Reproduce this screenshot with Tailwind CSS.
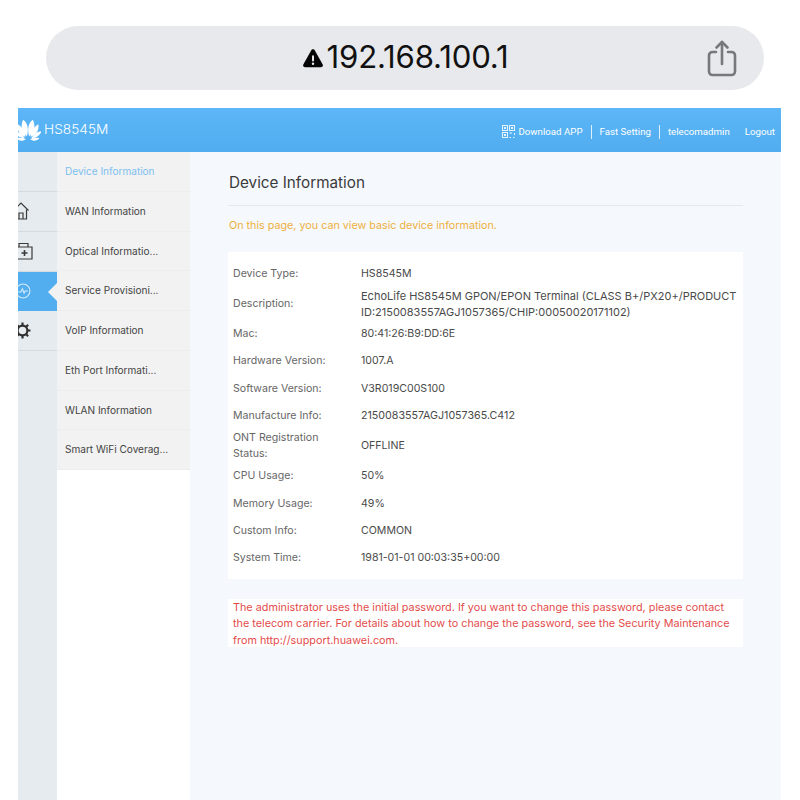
<!DOCTYPE html>
<html lang="en">
<head>
  <meta charset="UTF-8">
  <title>HS8545M - Device Information</title>
  <script src="https://cdn.jsdelivr.net/npm/@tailwindcss/browser@4"></script>
</head>
<body class="bg-white w-[800px] h-[800px] overflow-hidden font-['Inter',sans-serif]">

  <!-- browser address bar -->
  <div class="pt-[26px] pl-[46px] h-[108px]">
    <div class="relative w-[718px] h-[64px] rounded-[32px] bg-[#e8e9ec] flex items-center justify-center">
      <svg class="w-[22px] h-[22px] mr-[3px]" viewBox="0 0 20 20">
        <path d="M10 2 C10.8 2 11.3 2.5 11.7 3.2 L18.8 16 C19.4 17.2 18.8 18.3 17.4 18.3 L2.6 18.3 C1.2 18.3 0.6 17.2 1.2 16 L8.3 3.2 C8.7 2.5 9.2 2 10 2 Z" fill="#050505"/>
        <rect x="9.1" y="7.4" width="1.8" height="5.8" rx="0.9" fill="#e8e9ec"/>
        <circle cx="10" cy="15.3" r="1.1" fill="#e8e9ec"/>
      </svg>
      <span class="text-[31.2px] leading-none tracking-[-0.2px] text-[#111] -mt-[1px]">192.168.100.1</span>
      <svg class="absolute left-[661px] top-[14px] w-[30px] h-[37px]" viewBox="0 0 30 37" fill="none" stroke="#77787c" stroke-width="2.6" stroke-linecap="round" stroke-linejoin="round">
        <path d="M9 12 H5.5 C3.5 12 2 13.5 2 15.5 V31.5 C2 33.5 3.5 35 5.5 35 H24.5 C26.5 35 28 33.5 28 31.5 V15.5 C28 13.5 26.5 12 24.5 12 H21"/>
        <path d="M15 24 V2"/>
        <path d="M9.5 7.5 L15 2 L20.5 7.5"/>
      </svg>
    </div>
  </div>

  <!-- router admin page -->
  <div class="ml-[18px] w-[763px] h-[692px] flex flex-col overflow-hidden">
    <header class="h-[44px] shrink-0 flex items-center justify-between bg-gradient-to-b from-[#5cb6f8] to-[#51adef] text-white overflow-hidden">
      <div class="flex items-center">
        <svg class="w-[26px] h-[26px] -ml-[3px]" viewBox="0 0 24 24" fill="#fff">
          <path d="M11 17.8 C6.4 14 4.6 8 7.6 2.6 C11.4 5 13 11 11 17.8 Z"/>
          <path d="M13 17.8 C17.6 14 19.4 8 16.4 2.6 C12.6 5 11 11 13 17.8 Z"/>
          <path d="M9.6 18.2 C4.8 17 1.4 12.4 2.4 6.8 C6.6 9 9.6 13 9.6 18.2 Z"/>
          <path d="M14.4 18.2 C19.2 17 22.6 12.4 21.6 6.8 C17.4 9 14.4 13 14.4 18.2 Z"/>
          <path d="M8.8 19.4 C4.6 19.6 1 17.4 -0.4 13 C3.6 13.6 7 15.6 8.8 19.4 Z"/>
          <path d="M15.2 19.4 C19.4 19.6 23 17.4 24.4 13 C20.4 13.6 17 15.6 15.2 19.4 Z"/>
          <path d="M10 20.2 C7.5 22.6 3.8 22.4 1.4 19.4 C4.6 18.8 7.6 19 10 20.2 Z"/>
          <path d="M14 20.2 C16.5 22.6 20.2 22.4 22.6 19.4 C19.4 18.8 16.4 19 14 20.2 Z"/>
        </svg>
        <span class="ml-[3px] text-[13.7px] font-light leading-none">HS8545M</span>
      </div>
      <nav class="flex items-center text-[9.7px] font-['Roboto',sans-serif] mt-[4px] mr-[6px]">
        <svg class="w-[13px] h-[13px] mr-[3px]" viewBox="0 0 13 13" fill="none" stroke="#e8f4fd" stroke-width="1">
          <rect x="0.5" y="0.5" width="5" height="5"/>
          <rect x="7.5" y="0.5" width="5" height="5"/>
          <rect x="0.5" y="7.5" width="5" height="5"/>
          <path d="M7.5 8 H10 M12.5 8 V10 M7.5 12.5 H9 M11 12.5 H12.5" />
          <rect x="2" y="2" width="2" height="2" fill="#e8f4fd" stroke="none"/>
          <rect x="9" y="2" width="2" height="2" fill="#e8f4fd" stroke="none"/>
          <rect x="2" y="9" width="2" height="2" fill="#e8f4fd" stroke="none"/>
        </svg>
        <span>Download APP</span>
        <span class="w-px h-[14px] bg-white/80 mx-[8px]"></span>
        <span>Fast Setting</span>
        <span class="w-px h-[14px] bg-white/80 mx-[8px]"></span>
        <span>telecomadmin</span>
        <span class="ml-[15px]">Logout</span>
      </nav>
    </header>

    <div class="flex flex-1 min-h-0">
      <!-- icon rail -->
      <aside class="w-[39px] shrink-0 bg-[#e6ebef] overflow-hidden flex flex-col">
        <div class="h-[40px] border-b border-[#d5dade]"></div>
        <div class="h-[39.75px] border-b border-[#d5dade] flex items-center">
          <svg class="w-[16px] h-[18px] -ml-[5px]" viewBox="0 0 16 18" fill="none" stroke="#3a3a3a" stroke-width="1.2">
            <path d="M0.5 8.5 L8 1 L15.5 8.5"/>
            <path d="M2.5 7.5 V17 H13.5 V7.5"/>
            <path d="M6 17 V11 H10 V17"/>
          </svg>
        </div>
        <div class="h-[39.75px] border-b border-[#d5dade] flex items-center">
          <svg class="w-[16px] h-[18px] -ml-[1px]" viewBox="0 0 16 18" fill="none" stroke="#3a3a3a" stroke-width="1.2">
            <path d="M0 5 H15 V17 H0"/>
            <path d="M2 5 V1.5 H11 V5"/>
            <path d="M7.5 8 V14 M4.5 11 H10.5" stroke-width="1.6"/>
          </svg>
        </div>
        <div class="h-[39.75px] bg-[#52aeef] flex items-center relative">
          <svg class="w-[16px] h-[16px] -ml-[3px]" viewBox="0 0 15 15" fill="none" stroke="#d9eefc" stroke-width="1">
            <circle cx="7.5" cy="7.5" r="6.5"/>
            <path d="M3 8.5 H5.5 L7 5.5 L8.5 9.5 L9.5 7.5 H12"/>
          </svg>
          <svg class="absolute right-0 top-[11px] w-[9px] h-[18px]" viewBox="0 0 9 18"><path d="M9 0 V18 L0 9 Z" fill="#f2f2f2"/></svg>
        </div>
        <div class="h-[39.75px] border-b border-[#d5dade] flex items-center">
          <svg class="w-[17px] h-[17px] -ml-[4px]" viewBox="0 0 16 16" fill="none" stroke="#2e2e2e">
            <circle cx="8" cy="8" r="4.6" stroke-width="2"/>
            <path d="M8 0.5 V3 M8 13 V15.5 M0.5 8 H3 M13 8 H15.5 M2.7 2.7 L4.5 4.5 M11.5 11.5 L13.3 13.3 M2.7 13.3 L4.5 11.5 M11.5 4.5 L13.3 2.7" stroke-width="2"/>
          </svg>
        </div>
      </aside>

      <!-- sub menu -->
      <aside class="w-[133px] shrink-0 bg-white">
        <ul class="text-[10.05px] text-[#444] bg-[#f2f2f2]">
          <li class="h-[39.75px] flex items-center pl-[8px] border-b border-[#ededed] text-[#7cc0ef]">Device Information</li>
          <li class="h-[39.75px] flex items-center pl-[8px] pt-[0.5px] border-b border-[#ededed]">WAN Information</li>
          <li class="h-[39.75px] flex items-center pl-[8px] pt-[0.5px] border-b border-[#ededed]">Optical Informatio...</li>
          <li class="h-[39.75px] flex items-center pl-[8px] pt-[0.5px] border-b border-[#ededed]">Service Provisioni...</li>
          <li class="h-[39.75px] flex items-center pl-[8px] pt-[0.5px] border-b border-[#ededed]">VoIP Information</li>
          <li class="h-[39.75px] flex items-center pl-[8px] pt-[0.5px] border-b border-[#ededed]">Eth Port Informati...</li>
          <li class="h-[39.75px] flex items-center pl-[8px] pt-[0.5px] border-b border-[#ededed]">WLAN Information</li>
          <li class="h-[39.75px] flex items-center pl-[8px] pt-[0.5px] border-b border-[#ededed]">Smart WiFi Coverag...</li>
        </ul>
      </aside>

      <!-- main content -->
      <main class="flex-1 bg-[#f5f8fd] pl-[38px] pr-[38px]">
        <h1 class="h-[54px] flex items-end pl-px pb-[13px] text-[15.25px] leading-[18px] text-[#3b3b3b] border-b border-[#e6e8ea]">Device Information</h1>
        <p class="mt-[12px] pl-px text-[10.75px] leading-[16px] text-[#eeb040]">On this page, you can view basic device information.</p>
        <div class="mt-[18px] bg-white pt-[8.2px] pb-[6.8px] pl-[5px] pr-[5px] text-[10.6px] text-[#4a4a4a]">
          <div class="flex items-center h-[27.3px]"><span class="w-[128px] shrink-0 text-[#666]">Device Type:</span><span>HS8545M</span></div>
          <div class="flex items-center h-[33px]"><span class="w-[128px] shrink-0 text-[#666]">Description:</span><span class="leading-[16px] text-[11px]">EchoLife HS8545M GPON/EPON Terminal (CLASS B+/PX20+/PRODUCT<br>ID:2150083557AGJ1057365/CHIP:00050020171102)</span></div>
          <div class="flex items-center h-[27.3px]"><span class="w-[128px] shrink-0 text-[#666]">Mac:</span><span>80:41:26:B9:DD:6E</span></div>
          <div class="flex items-center h-[27.3px]"><span class="w-[128px] shrink-0 text-[#666]">Hardware Version:</span><span>1007.A</span></div>
          <div class="flex items-center h-[27.3px]"><span class="w-[128px] shrink-0 text-[#666]">Software Version:</span><span>V3R019C00S100</span></div>
          <div class="flex items-center h-[27.3px]"><span class="w-[128px] shrink-0 text-[#666]">Manufacture Info:</span><span class="text-[10.7px]">2150083557AGJ1057365.C412</span></div>
          <div class="flex items-center h-[33px]"><span class="w-[128px] shrink-0 text-[#666] leading-[16px]">ONT Registration<br>Status:</span><span>OFFLINE</span></div>
          <div class="flex items-center h-[27.3px]"><span class="w-[128px] shrink-0 text-[#666]">CPU Usage:</span><span>50%</span></div>
          <div class="flex items-center h-[27.3px]"><span class="w-[128px] shrink-0 text-[#666]">Memory Usage:</span><span>49%</span></div>
          <div class="flex items-center h-[27.3px]"><span class="w-[128px] shrink-0 text-[#666]">Custom Info:</span><span>COMMON</span></div>
          <div class="flex items-center h-[27.3px]"><span class="w-[128px] shrink-0 text-[#666]">System Time:</span><span>1981-01-01 00:03:35+00:00</span></div>
        </div>
        <p class="mt-[20px] bg-white pl-[5px] pt-px h-[48px] text-[10.82px] leading-[16.5px] text-[#e34b4b]">The administrator uses the initial password. If you want to change this password, please contact<br>the telecom carrier. For details about how to change the password, see the Security Maintenance<br>from http://support.huawei.com.</p>
      </main>
    </div>
  </div>
</body>
</html>
